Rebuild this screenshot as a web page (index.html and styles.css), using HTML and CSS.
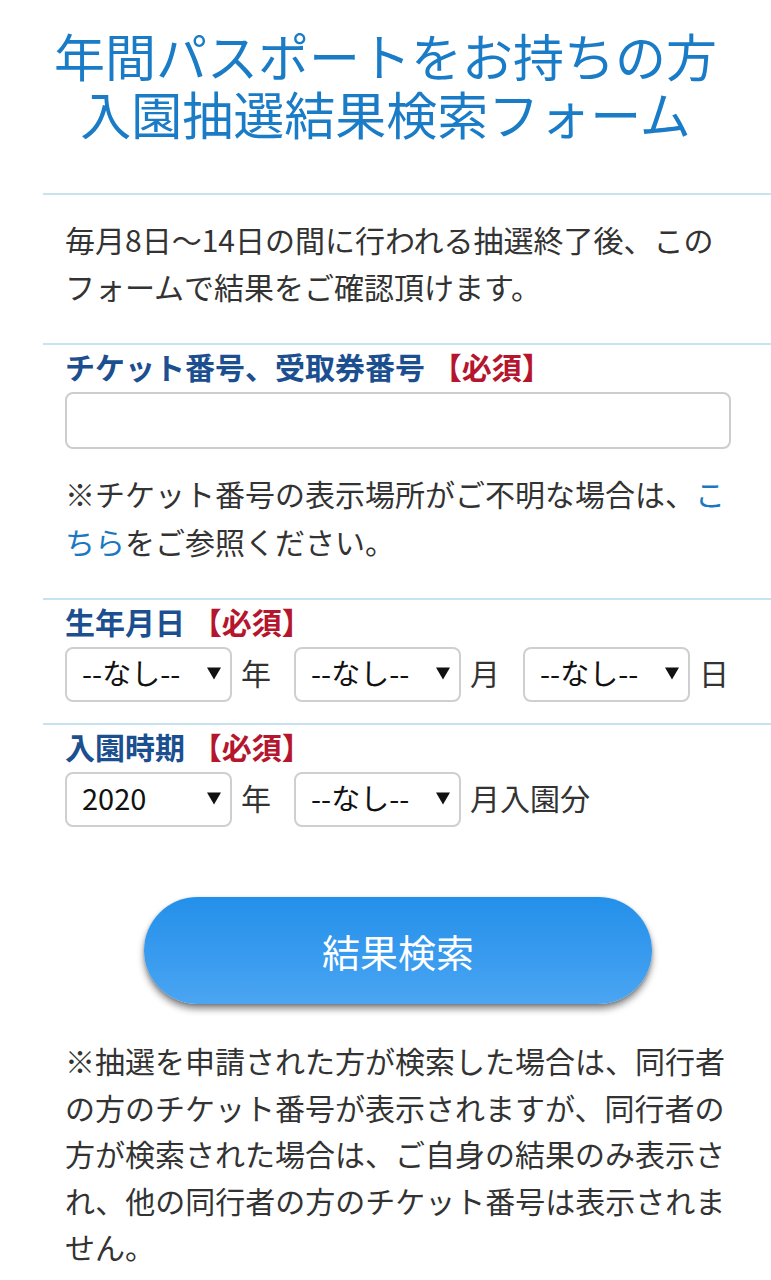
FILE: index.html
```html
<!DOCTYPE html>
<html lang="ja">
<head>
<meta charset="utf-8">
<meta name="viewport" content="width=device-width, initial-scale=1">
<title>入園抽選結果検索フォーム</title>
<link rel="stylesheet" href="styles.css">
</head>
<body>
<header class="page-head">
  <h1 class="page-title"><span class="title-line">年間パスポートをお持ちの方</span><span class="title-line">入園抽選結果検索フォーム</span></h1>
</header>
<main class="form">
  <section class="block intro">
    <p class="text">毎月8日〜14日の間に行われる抽選終了後、このフォームで結果をご確認頂けます。</p>
  </section>

  <section class="block ticket">
    <div class="label">チケット番号、受取券番号 <span class="req">【必須】</span></div>
    <input class="text-input" type="text" aria-label="チケット番号、受取券番号">
    <p class="note">※チケット番号の表示場所がご不明な場合は、<a class="link" href="#">こちら</a>をご参照ください。</p>
  </section>

  <section class="block birth">
    <div class="label">生年月日 <span class="req">【必須】</span></div>
    <div class="select-row">
      <div class="select-wrap">
        <select class="select" aria-label="年"><option>--なし--</option></select>
        <svg class="arrow" viewBox="0 0 14 12" aria-hidden="true"><polygon points="0,0 14,0 7,12"/></svg>
      </div>
      <span class="unit">年</span>
      <div class="select-wrap">
        <select class="select" aria-label="月"><option>--なし--</option></select>
        <svg class="arrow" viewBox="0 0 14 12" aria-hidden="true"><polygon points="0,0 14,0 7,12"/></svg>
      </div>
      <span class="unit">月</span>
      <div class="select-wrap">
        <select class="select" aria-label="日"><option>--なし--</option></select>
        <svg class="arrow" viewBox="0 0 14 12" aria-hidden="true"><polygon points="0,0 14,0 7,12"/></svg>
      </div>
      <span class="unit">日</span>
    </div>
  </section>

  <section class="block entry">
    <div class="label">入園時期 <span class="req">【必須】</span></div>
    <div class="select-row">
      <div class="select-wrap">
        <select class="select" aria-label="入園年"><option>2020</option></select>
        <svg class="arrow" viewBox="0 0 14 12" aria-hidden="true"><polygon points="0,0 14,0 7,12"/></svg>
      </div>
      <span class="unit">年</span>
      <div class="select-wrap">
        <select class="select" aria-label="入園月"><option>--なし--</option></select>
        <svg class="arrow" viewBox="0 0 14 12" aria-hidden="true"><polygon points="0,0 14,0 7,12"/></svg>
      </div>
      <span class="unit">月入園分</span>
    </div>
    <div class="actions">
      <button class="search-btn" type="button">結果検索</button>
    </div>
    <p class="foot-note">※抽選を申請された方が検索した場合は、同行者の方のチケット番号が表示されますが、同行者の方が検索された場合は、ご自身の結果のみ表示され、他の同行者の方のチケット番号は表示されません。</p>
  </section>
</main>
</body>
</html>
```

FILE: styles.css
```css
* { box-sizing: border-box; }

html, body {
  margin: 0;
  padding: 0;
  background: #fff;
}

body {
  font-family: "Noto Sans CJK JP", "Noto Sans", sans-serif;
  color: #333;
}

.page-head {
  padding-top: 26px;
  margin-bottom: 51px;
}

.page-title {
  margin: 0;
  font-size: 51px;
  line-height: 58px;
  font-weight: 400;
  color: #1a7bc6;
  text-align: center;
  letter-spacing: 0;
}

.title-line {
  display: block;
}

.form {
  margin-left: 43px;
}

.block {
  border-top: 2px solid #c7e3ef;
  padding: 0 40px 0 22px;
}

.text, .note, .foot-note {
  margin: 0;
  font-size: 30px;
  color: #333;
}

.intro {
  padding-top: 21px;
  padding-bottom: 33px;
}

.intro .text {
  line-height: 47px;
}

.label {
  font-size: 30px;
  line-height: 42px;
  font-weight: 700;
  color: #1c4f8f;
}

.req {
  color: #b5152d;
}

.ticket {
  padding-bottom: 33px;
}

.text-input {
  display: block;
  width: 100%;
  height: 57px;
  margin-top: 5px;
  border: 2px solid #cdcdcd;
  border-radius: 8px;
  background: #fff;
  font-size: 30px;
  font-family: inherit;
  padding: 0 14px;
}

.note {
  margin-top: 20px;
  line-height: 48px;
}

.link {
  color: #1a78c2;
  text-decoration: none;
}

.birth {
  padding-bottom: 21px;
}

.select-row {
  display: flex;
  align-items: center;
  margin-top: 5px;
}

.select-wrap {
  position: relative;
  width: 167px;
  height: 55px;
  flex: none;
}

.select {
  appearance: none;
  -webkit-appearance: none;
  width: 100%;
  height: 100%;
  border: 2px solid #cfcfcf;
  border-radius: 8px;
  background: #fff;
  font-family: "Noto Sans CJK JP", Roboto, sans-serif;
  font-size: 29px;
  color: #111;
  padding: 0 40px 6px 15px;
  margin: 0;
}

.arrow {
  position: absolute;
  right: 11px;
  top: 50%;
  width: 14px;
  height: 13px;
  margin-top: -8px;
  fill: #111;
  pointer-events: none;
}

.unit {
  font-size: 30px;
  color: #333;
  margin-left: 9px;
  margin-right: 23px;
  line-height: 42px;
  margin-bottom: 6px;
}

.actions {
  display: flex;
  justify-content: center;
  margin-top: 70px;
}

.search-btn {
  width: 508px;
  height: 107px;
  border: none;
  border-radius: 54px;
  background: linear-gradient(to bottom, #2490ea 0%, #3a9cef 60%, #4ba5f2 100%);
  box-shadow: 0 5px 7px rgba(0, 0, 0, 0.45), 0 1px 3px rgba(0, 0, 0, 0.2);
  color: #fff;
  font-family: "Noto Sans CJK JP", sans-serif;
  font-size: 38px;
  font-weight: 400;
  cursor: pointer;
}

.foot-note {
  margin-top: 33px;
  line-height: 46.5px;
  padding-bottom: 20px;
}
```
